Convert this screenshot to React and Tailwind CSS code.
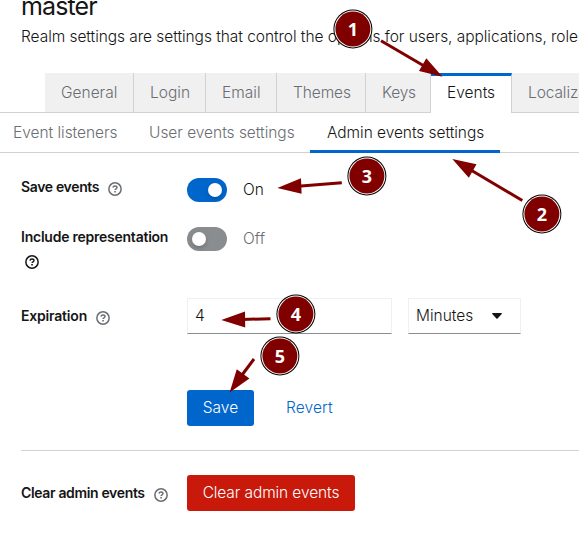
import React from "react";

function HelpIcon({ dark }) {
  return (
    <svg width="14" height="14" viewBox="0 0 14 14" fill="none" stroke={dark ? "#151515" : "#6a6e73"} className="shrink-0">
      <circle cx="7" cy="7" r="6.15" strokeWidth="1.5" />
      <path d="M5 5.6C5.1 4.4 6 4 7 4c1.2 0 2 .6 2 1.6C9 6.9 7.1 6.8 7.1 8.1" strokeWidth="1.4" />
      <path d="M7.05 9v1.6" strokeWidth="1.6" />
    </svg>
  );
}

function Tab({ label, width, active, tracking }) {
  return (
    <div
      className={`${width} ${
        active
          ? "h-10 border-t-[3px] border-t-[#06c] border-r border-r-[#d2d2d2] bg-white pb-[4px] text-[#151515]"
          : "h-[39px] border-r border-r-[#d2d2d2] bg-[#f0f0f0] pt-px text-[#6a6e73]"
      } flex shrink-0 items-center pl-4`}
    >
      <span className={tracking}>{label}</span>
    </div>
  );
}

function Label({ children, tracking, icon = true }) {
  return (
    <div className="flex items-center text-[14px] leading-[21px] font-semibold text-[#151515]">
      <span className={tracking}>{children}</span>
      {icon && (
        <span className="ml-[9px] pt-[4px]">
          <HelpIcon />
        </span>
      )}
    </div>
  );
}

function Toggle({ on }) {
  return (
    <div
      className={`flex h-6 w-10 items-center rounded-full px-[5px] ${
        on ? "justify-end bg-[#06c]" : "justify-start bg-[#8a8d90]"
      }`}
    >
      <div className="h-[14px] w-[14px] rounded-full bg-white shadow-[0_2px_4px_rgba(3,3,3,0.2)]" />
    </div>
  );
}

const arrows = [
  { line: [381, 40.7, 425, 66.5], head: "442.5,76.8 426.3,58.3 419,71" },
  { line: [522.3, 200.5, 470, 169.5], head: "452.3,159 476.5,164.2 468.8,177.8" },
  { line: [341.8, 182.8, 298, 186.3], head: "277.3,188 301,178.2 301.6,193.8" },
  { line: [270.5, 318.7, 242, 319.5], head: "221.3,320 245,311.6 245.2,327.4" },
  { line: [254, 359, 242, 375], head: "229.6,392.6 236.8,369.2 249.4,378.5" },
];

const badges = [
  { n: 1, x: 352.9, y: 29 },
  { n: 2, x: 541.9, y: 214 },
  { n: 3, x: 366.9, y: 176 },
  { n: 4, x: 295.9, y: 314 },
  { n: 5, x: 279.9, y: 356 },
];

export default function App() {
  return (
    <div className="relative h-[557px] w-[579px] overflow-hidden bg-white font-['Inter',sans-serif] text-[15.5px] leading-6 font-[350] whitespace-nowrap text-[#151515]">
      <header className="flex h-[73px] flex-col pl-[21px]">
        <h1 className="-mt-[10px] h-[35px] text-[25px] leading-8 font-normal tracking-[-0.9px]">master</h1>
        <p className="tracking-[-0.05px]">
          Realm settings are settings that control the options for users, applications, roles
        </p>
      </header>

      <nav className="flex h-10 items-start border-b border-[#d2d2d2] pl-[45px]">
        <Tab label="General" width="w-[89px]" tracking="tracking-[0px]" />
        <Tab label="Login" width="w-[72px]" tracking="tracking-[0px]" />
        <Tab label="Email" width="w-[71px]" tracking="tracking-[0px]" />
        <Tab label="Themes" width="w-[89px]" tracking="tracking-[-0.1px]" />
        <Tab label="Keys" width="w-[65px]" tracking="tracking-[-0.2px]" />
        <Tab label="Events" width="w-[81px]" tracking="tracking-[0px]" active />
        <Tab label="Localization" width="w-[120px]" tracking="tracking-[-0.1px]" />
      </nav>

      <nav className="flex h-10 items-start border-b border-[#d2d2d2] leading-10 text-[#6a6e73]">
        <span className="w-[149px] pl-[13px] tracking-[-0.03px]">Event listeners</span>
        <span className="w-[161px] tracking-[-0.03px]">User events settings</span>
        <span className="h-10 w-[190px] border-b-[3px] border-[#06c] pl-[17px] tracking-[-0.05px] text-[#151515]">
          Admin events settings
        </span>
      </nav>

      <main className="flex flex-col">
        <div className="flex h-[74px] pt-[25px] pl-[21px]">
          <div className="w-[166px]">
            <div className="-mt-[2px]">
              <Label tracking="tracking-[-0.35px]">Save events</Label>
            </div>
          </div>
          <Toggle on />
          <span className="ml-4">On</span>
        </div>
        <div className="flex h-[71px] pl-[21px]">
          <div className="w-[166px]">
            <div className="-mt-px">
              <Label tracking="tracking-[-0.24px]" icon={false}>
                Include representation
              </Label>
            </div>
            <div className="mt-[8px] ml-1">
              <HelpIcon dark />
            </div>
          </div>
          <Toggle />
          <span className="ml-4 text-[#6a6e73]">Off</span>
        </div>
        <div className="flex h-[92px] pl-[21px]">
          <div className="w-[166px] pt-[7px]">
            <Label tracking="tracking-[-0.2px]">Expiration</Label>
          </div>
          <div className="h-9 w-[205px] border border-[#f0f0f0] border-b-[#8a8d90] pl-[7px] leading-[34px]">4</div>
          <div className="ml-4 flex h-9 w-[113px] items-center border border-[#f0f0f0] border-b-[#8a8d90] pl-[7px]">
            <span className="w-[76px] tracking-[0px]">Minutes</span>
            <svg width="10" height="6" viewBox="0 0 10 6" fill="#151515">
              <path d="M.6 0h8.8q.9.1.3.9L5.6 5.6q-.6.5-1.2 0L.3.9Q-.3.1.6 0z" />
            </svg>
          </div>
        </div>
        <div className="flex h-[60px] pl-[187px]">
          <button className="h-9 w-[67px] rounded-[3px] bg-[#06c] text-white">Save</button>
          <button className="ml-8 h-9 tracking-[0.1px] text-[#06c]">Revert</button>
        </div>
        <div className="ml-[21px] flex border-t border-[#d2d2d2] pt-6">
          <div className="w-[166px] pt-[7px]">
            <Label tracking="tracking-[-0.35px]">Clear admin events</Label>
          </div>
          <button className="h-9 w-[168px] rounded-[3px] bg-[#c9190b] tracking-[-0.1px] text-white">
            Clear admin events
          </button>
        </div>
      </main>

      <svg className="absolute inset-0" width="579" height="557" fill="#800000" stroke="none">
        {arrows.map(({ line, head }) => (
          <g key={head}>
            <line x1={line[0]} y1={line[1]} x2={line[2]} y2={line[3]} stroke="#800000" strokeWidth="3" />
            <polygon points={head} />
          </g>
        ))}
        {badges.map(({ n, x, y }) => (
          <g key={n}>
            <circle cx={x} cy={y} r="19.5" fill="#000" />
            <circle cx={x} cy={y} r="18.5" fill="#fff" />
            <circle cx={x} cy={y} r="17.5" />
            <text
              x={x}
              y={y + 6.6}
              textAnchor="middle"
              fill="#fff"
              className="font-['Open_Sans',sans-serif] text-[18px] font-bold"
            >
              {n}
            </text>
          </g>
        ))}
      </svg>
    </div>
  );
}
